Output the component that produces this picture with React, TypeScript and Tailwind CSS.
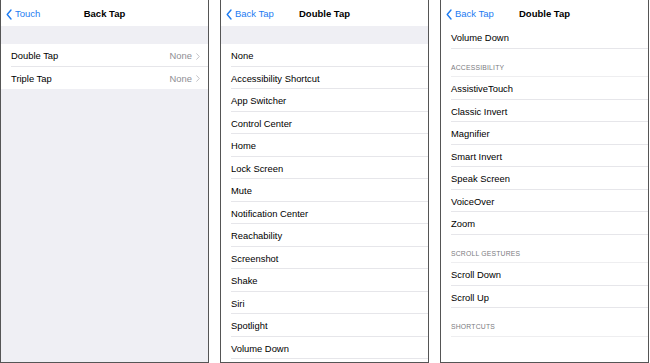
import * as React from 'react'

// ============================================================================
// SMALL PIECES
// ============================================================================

const font = { fontFamily: '"Liberation Sans", Arial, sans-serif' }

function BackChevron() {
  return (
    <svg width="6" height="11" viewBox="0 0 6 11" className="shrink-0">
      <path d="M5 1 L1.2 5.5 L5 10" fill="none" stroke="#1e7cf2" strokeWidth="1.4" strokeLinecap="round" strokeLinejoin="round" />
    </svg>
  )
}

function RowChevron() {
  return (
    <svg width="4" height="7" viewBox="0 0 4 7" className="shrink-0">
      <path d="M0.7 0.7 L3.3 3.5 L0.7 6.3" fill="none" stroke="#c4c4c8" strokeWidth="1" strokeLinecap="round" strokeLinejoin="round" />
    </svg>
  )
}

function NavBar({ back, title }: { back: string; title: string }) {
  return (
    <div className="relative h-[26px] shrink-0 bg-white flex items-center pt-[2px]">
      <div className="flex items-center gap-[3px] pl-[5px] text-[#1e7cf2] text-[9.5px]">
        <BackChevron />
        <span>{back}</span>
      </div>
      <div className="absolute inset-0 pt-[2px] flex items-center justify-center text-[9.5px] font-bold text-black pointer-events-none">
        {title}
      </div>
    </div>
  )
}

function Row({ label, value }: { label: string; value?: string }) {
  return (
    <div className="ml-[10px] h-[22.5px] shrink-0 flex items-center justify-between border-b border-[#e6e6ea] pt-[3px] pr-[8px] text-[9.4px] text-black">
      <span>{label}</span>
      {value && (
        <span className="flex items-center gap-[4px] text-[#8e8e93]">
          {value}
          <RowChevron />
        </span>
      )}
    </div>
  )
}

function Header({ label }: { label: string }) {
  return (
    <div className="ml-[10px] h-[28.5px] shrink-0 flex items-end pb-[3px] border-b border-[#eeeef0] text-[6.8px] tracking-[0.2px] text-[#7b7b80]">
      {label}
    </div>
  )
}

function Panel({ children, className }: { children: React.ReactNode; className?: string }) {
  return (
    <div className={`w-[209px] h-[363px] flex flex-col overflow-hidden border-x border-b border-[#555555] ${className ?? ''}`}>
      {children}
    </div>
  )
}

// ============================================================================
// APP
// ============================================================================

const actions = [
  'None',
  'Accessibility Shortcut',
  'App Switcher',
  'Control Center',
  'Home',
  'Lock Screen',
  'Mute',
  'Notification Center',
  'Reachability',
  'Screenshot',
  'Shake',
  'Siri',
  'Spotlight',
  'Volume Down',
]

export default function App() {
  return (
    <div className="w-[650px] h-[363px] bg-white flex gap-[11px] overflow-hidden" style={font}>
      <Panel className="bg-[#efeff4]">
        <NavBar back="Touch" title="Back Tap" />
        <div className="h-[18px] shrink-0" />
        <div className="bg-white">
          <Row label="Double Tap" value="None" />
          <div className="ml-[10px] h-[22px] flex items-center justify-between pt-[3px] pr-[8px] text-[9.4px] text-black">
            <span>Triple Tap</span>
            <span className="flex items-center gap-[4px] text-[#8e8e93]">
              None
              <RowChevron />
            </span>
          </div>
        </div>
      </Panel>

      <Panel className="bg-white">
        <NavBar back="Back Tap" title="Double Tap" />
        <div className="h-[18px] shrink-0 bg-[#efeff4]" />
        {actions.map((a) => (
          <Row key={a} label={a} />
        ))}
      </Panel>

      <Panel className="bg-white">
        <NavBar back="Back Tap" title="Double Tap" />
        <Row label="Volume Down" />
        <Header label="ACCESSIBILITY" />
        {['AssistiveTouch', 'Classic Invert', 'Magnifier', 'Smart Invert', 'Speak Screen', 'VoiceOver', 'Zoom'].map((a) => (
          <Row key={a} label={a} />
        ))}
        <Header label="SCROLL GESTURES" />
        <Row label="Scroll Down" />
        <Row label="Scroll Up" />
        <Header label="SHORTCUTS" />
      </Panel>
    </div>
  )
}
